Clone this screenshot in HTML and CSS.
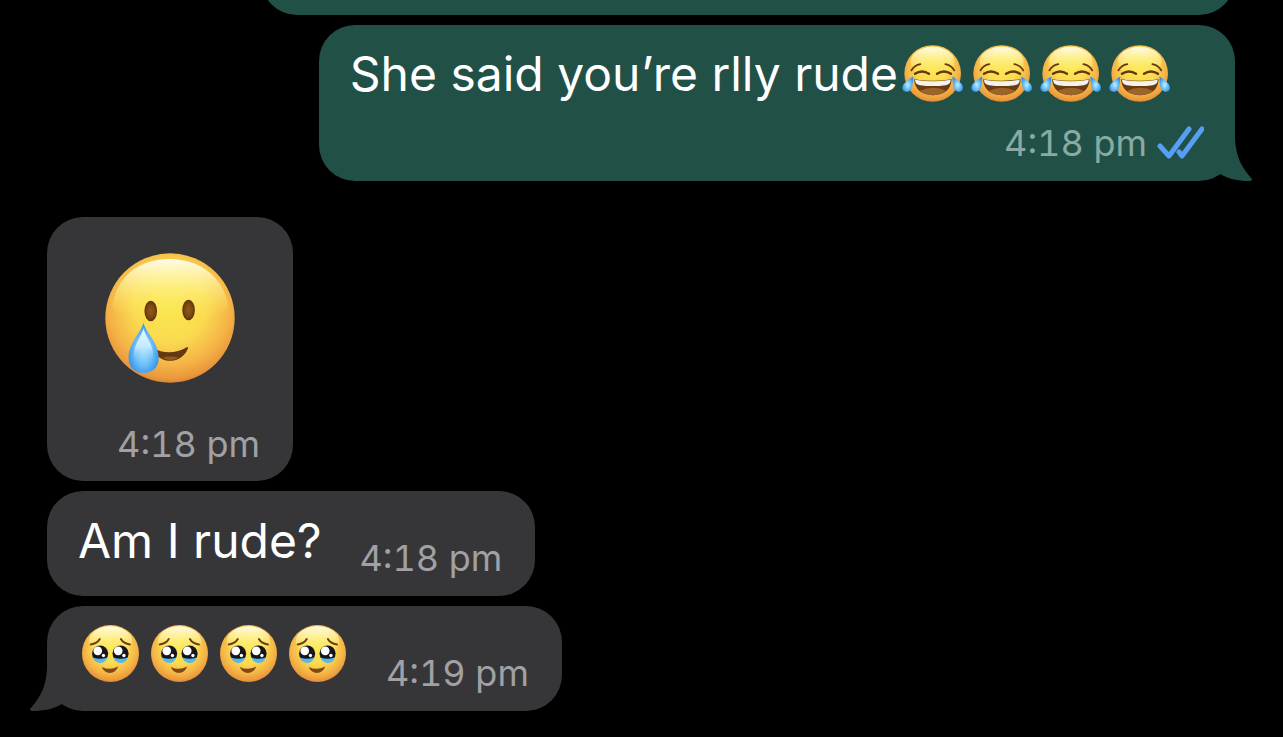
FILE: index.html
```html
<!DOCTYPE html>
<html lang="en">

<head>
    <meta charset="UTF-8">
    <meta name="viewport" content="width=device-width, initial-scale=1.0">
    <title>Chat</title>
    <link rel="stylesheet" href="styles.css">
</head>

<body>
    <!-- shared shapes -->
    <svg class="shapes" width="0" height="0" aria-hidden="true">
        <defs>
            <radialGradient id="face" cx="0.5" cy="0.4" r="0.62">
                <stop offset="0" stop-color="#fbe750"></stop>
                <stop offset="0.45" stop-color="#fadb50"></stop>
                <stop offset="0.75" stop-color="#f5b446"></stop>
                <stop offset="0.92" stop-color="#ea973b"></stop>
                <stop offset="1" stop-color="#cf7d2c"></stop>
            </radialGradient>
            <linearGradient id="shine" x1="0" y1="0" x2="0" y2="1">
                <stop offset="0" stop-color="#fffef0" stop-opacity="0.95"></stop>
                <stop offset="0.4" stop-color="#fffbb0" stop-opacity="0.6"></stop>
                <stop offset="1" stop-color="#fdec50" stop-opacity="0"></stop>
            </linearGradient>
            <radialGradient id="tear" cx="0.5" cy="0.55" r="0.55">
                <stop offset="0" stop-color="#c5efff"></stop>
                <stop offset="0.45" stop-color="#76c8fb"></stop>
                <stop offset="1" stop-color="#3292ea"></stop>
            </radialGradient>
            <linearGradient id="drop" x1="0" y1="0" x2="0" y2="1">
                <stop offset="0" stop-color="#eafaff"></stop>
                <stop offset="0.5" stop-color="#c4e9fe"></stop>
                <stop offset="1" stop-color="#55b5f6" stop-opacity="0"></stop>
            </linearGradient>
            <radialGradient id="eye" cx="0.5" cy="0.5" r="0.5">
                <stop offset="0" stop-color="#91591a"></stop>
                <stop offset="0.6" stop-color="#7d4914"></stop>
                <stop offset="1" stop-color="#5c300c"></stop>
            </radialGradient>
        </defs>

        <symbol id="joy" viewBox="34 44 183 170">
            <circle cx="126" cy="129" r="85" fill="url(#face)"></circle>
            <ellipse cx="126" cy="94" rx="66" ry="45" fill="url(#shine)"></ellipse>
            <g fill="none" stroke="#65370c" stroke-linecap="round">
                <path d="M62 120 Q71 104 89 101" stroke-width="5"></path>
                <path d="M191 120 Q182 104 164 101" stroke-width="5"></path>
                <path d="M73 130 Q94 116 115 130" stroke-width="7"></path>
                <path d="M139 130 Q160 116 181 130" stroke-width="7"></path>
            </g>
            <path d="M70 146 Q126 155 183 146 Q180 192 127 194 Q74 192 70 146Z" fill="#6b3c11"></path>
            <path d="M88 181 Q127 163 166 181 Q150 194 127 194 Q104 194 88 181Z" fill="#9b6429"></path>
            <path d="M73 148 Q126 157 180 148 Q180 163 165 164 Q126 169 88 164 Q73 162 73 148Z" fill="#f5f2ee"></path>
            <path d="M68 138 C59 143 35 158 35 172 C35 183 49 188 58 180 C67 173 67 151 68 138Z" fill="url(#tear)"></path>
            <path d="M185 138 C194 143 217 158 217 172 C217 183 204 188 195 180 C186 173 186 151 185 138Z" fill="url(#tear)"></path>
        </symbol>

        <symbol id="smile-tear" viewBox="45 38 390 392">
            <circle cx="240" cy="234" r="195" fill="url(#face)"></circle>
            <path d="M66 201 C78 105 151 56 238 56 C332 56 405 114 416 201 C379 249 101 249 66 201Z" fill="url(#shine)"></path>
            <ellipse cx="182" cy="213" rx="19" ry="31" fill="url(#eye)"></ellipse>
            <ellipse cx="296" cy="210" rx="19" ry="31" fill="url(#eye)"></ellipse>
            <path d="M192 325 C215 342 262 341 289 323 Q296 318 294 326 C286 346 268 362 243 363 C220 364 202 352 192 338Z" fill="#65390f"></path>
            <path d="M218 353 Q242 347 266 353 Q256 361 242 361 Q228 361 218 353Z" fill="#8f5b20"></path>
            <path d="M160 248 C155 273 115 310 115 354 C115 384 134 400 160 400 C187 400 206 384 206 354 C206 310 165 273 160 248Z" fill="url(#tear)"></path>
            <path d="M160 266 C153 292 131 315 131 345 C131 385 188 385 189 345 C189 315 167 292 160 266Z" fill="url(#drop)"></path>
        </symbol>

        <symbol id="teary" viewBox="39 44 170 170">
            <circle cx="124" cy="129" r="85" fill="url(#face)"></circle>
            <ellipse cx="124" cy="92" rx="65" ry="44" fill="url(#shine)"></ellipse>
            <g fill="none" stroke="#6e3e0e" stroke-width="6" stroke-linecap="round">
                <path d="M65 102 Q84 100 92 86"></path>
                <path d="M182 102 Q163 100 155 86"></path>
            </g>
            <circle cx="93" cy="129" r="24" fill="#171519"></circle>
            <circle cx="154" cy="129" r="24" fill="#171519"></circle>
            <path d="M72 141 Q93 149 114 141 Q109 157 94 157 Q77 157 72 141Z" fill="#55b7ed"></path>
            <path d="M133 141 Q154 149 175 141 Q171 157 155 157 Q138 157 133 141Z" fill="#55b7ed"></path>
            <g fill="#fff">
                <circle cx="86" cy="121" r="13"></circle>
                <circle cx="147" cy="121" r="13"></circle>
                <circle cx="103" cy="135" r="5"></circle>
                <circle cx="164" cy="135" r="5"></circle>
            </g>
            <path d="M98 169 Q122 181 147 168 Q140 187 122 187 Q105 186 98 169Z" fill="#804914"></path>
        </symbol>

        <symbol id="tail" viewBox="0 0 47 56">
            <path d="M0 0 H30 V14 C31 31 36 42 47 54 Q47 56 44 56 C33 56 24 54 15 49 L0 20Z"></path>
        </symbol>
    </svg>

    <main class="chat">
        <div class="bubble sent previous"></div>

        <div class="bubble sent long">
            <p class="text">She said you’re rlly rude<span class="emojis" role="img" aria-label="four faces with tears of joy"><svg class="joy"><use href="#joy"></use></svg><svg class="joy"><use href="#joy"></use></svg><svg class="joy"><use href="#joy"></use></svg><svg class="joy"><use href="#joy"></use></svg></span></p>
            <div class="meta">
                <time datetime="16:18">4:18 pm</time>
                <svg class="ticks" viewBox="0 0 48 34" role="img" aria-label="Read">
                    <path d="M4 20 L13 30 L33 3 M23 26 L26 30 L46 3"></path>
                </svg>
            </div>
            <svg class="tail"><use href="#tail"></use></svg>
        </div>

        <div class="bubble received single">
            <svg class="big-emoji" role="img" aria-label="smiling face with tear"><use href="#smile-tear"></use></svg>
            <time datetime="16:18">4:18 pm</time>
        </div>

        <div class="bubble received short">
            <p class="text">Am I rude?</p>
            <time datetime="16:18">4:18 pm</time>
        </div>

        <div class="bubble received short">
            <p class="emojis" role="img" aria-label="four faces holding back tears">
                <svg class="teary"><use href="#teary"></use></svg>
                <svg class="teary"><use href="#teary"></use></svg>
                <svg class="teary"><use href="#teary"></use></svg>
                <svg class="teary"><use href="#teary"></use></svg>
            </p>
            <time datetime="16:19">4:19 pm</time>
            <svg class="tail"><use href="#tail"></use></svg>
        </div>
    </main>
</body>

</html>
```
FILE: styles.css
```css
* {
    padding: 0;
    margin: 0;
    box-sizing: border-box;
}

body {
    background-color: #000;
    font-family: Inter, "Liberation Sans", sans-serif;
    overflow: hidden;
}

.shapes {
    position: absolute;
}

.chat {
    display: flex;
    flex-direction: column;
    align-items: flex-start;
    gap: 10px;
    padding: 0 48px 27px 47px;
}

.bubble {
    position: relative;
    border-radius: 36px;
    color: #fff;
}

.sent {
    align-self: flex-end;
    background-color: #215047;
    fill: #215047;
}

.received {
    background-color: #363638;
    fill: #363638;
}

.previous {
    width: 82%;
    height: 105px;
    margin-top: -90px;
}

.text {
    font-size: 48px;
    line-height: 62px;
    white-space: nowrap;
}

.long {
    padding: 18px 31px 16px;
    margin-bottom: 26px;
}

.long .text {
    display: flex;
    align-items: flex-start;
    padding-right: 34px;
}

.emojis {
    display: flex;
    gap: 8px;
    margin-left: 4px;
}

.long .emojis {
    padding-top: 2px;
}

.joy {
    width: 61px;
    height: 57px;
}

.teary {
    width: 57px;
    height: 57px;
}

time {
    font-size: 36px;
    line-height: 44px;
    font-variant-numeric: tabular-nums;
    color: #a0a0a5;
    white-space: nowrap;
}

.meta {
    display: flex;
    align-items: center;
    justify-content: flex-end;
    gap: 9px;
    margin-top: 16px;
}

.meta time {
    color: #89aaa3;
}

.ticks {
    width: 48px;
    height: 34px;
    fill: none;
    stroke: #579ff5;
    stroke-width: 5;
    stroke-linecap: round;
    stroke-linejoin: round;
}

.single {
    display: flex;
    flex-direction: column;
    align-items: flex-end;
    justify-content: space-between;
    padding: 36px 33px 15px 58px;
    height: 264px;
}

.big-emoji {
    width: 130px;
    height: 130px;
    margin-right: 25px;
}

.short {
    display: flex;
    align-items: flex-end;
    gap: 38px;
    height: 105px;
    padding: 19px 33px 16px 31px;
}

.short .text {
    align-self: flex-start;
}

.short .emojis {
    align-self: flex-start;
    gap: 12px;
    padding-right: 2px;
}

.tail {
    position: absolute;
    bottom: 0;
    right: -17px;
    width: 47px;
    height: 56px;
}

.received .tail {
    right: auto;
    left: -17px;
    transform: scaleX(-1);
}
```
